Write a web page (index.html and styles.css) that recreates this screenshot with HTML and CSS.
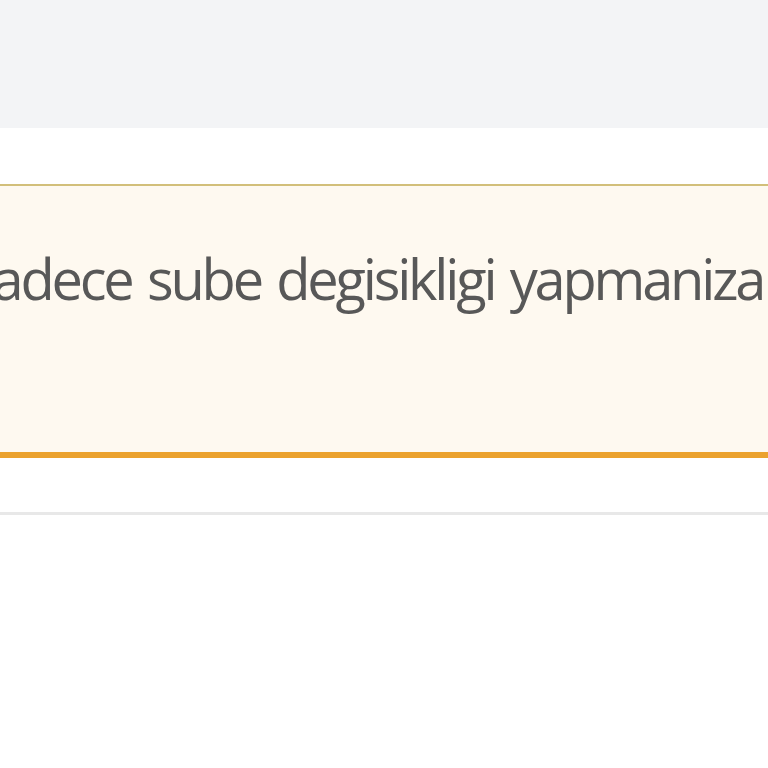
FILE: index.html
```html
<!DOCTYPE html>
<html lang="tr">
<head>
    <meta charset="UTF-8">
    <meta name="viewport" content="width=device-width, initial-scale=1.0">
    <title>Sube</title>
    <link rel="stylesheet" href="styles.css">
</head>
<body>
    <div class="topbar"></div>
    <div class="panel">
        <div class="alert">
            <p class="alert-text">Sadece sube degisikligi yapmaniza izin verilmektedir</p>
        </div>
    </div>
    <div class="content"></div>
</body>
</html>
```

FILE: styles.css
```css
html, body{
    margin: 0;
    padding: 0;
    height: 768px;
    background: #ffffff;
    font-family: "Open Sans", "Noto Sans", sans-serif;
    overflow: hidden;
}
.topbar{
    height: 128px;
    background-color: #f3f4f6;
}
.panel{
    padding-top: 56px;
    padding-bottom: 54px;
    border-bottom: 3px solid #e8e8e8;
}
.alert{
    background-color: #fef9f0;
    border-top: 2px solid #d2bf7a;
    border-bottom: 6px solid #eba22e;
    height: 266px;
    overflow: hidden;
}
.alert-text{
    margin: 0;
    margin-left: -35px;
    padding-top: 52px;
    font-size: 56px;
    line-height: 80px;
    letter-spacing: -3.2px;
    word-spacing: 4px;
    color: #585858;
    white-space: nowrap;
}
.content{
    height: 200px;
}
```
